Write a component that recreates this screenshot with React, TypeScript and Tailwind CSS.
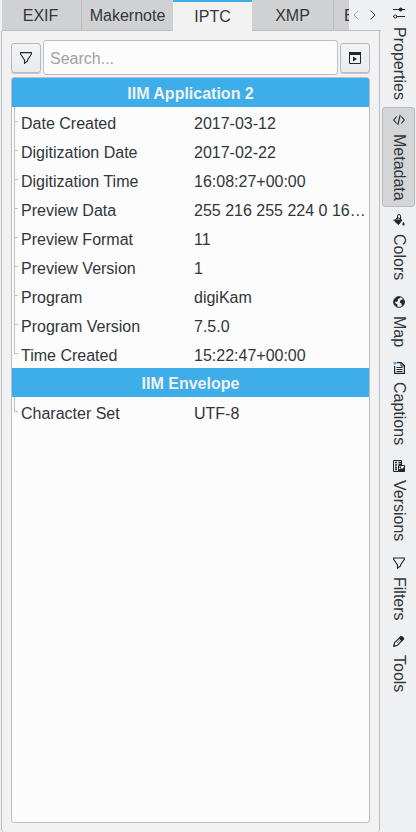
import type { ReactNode } from "react";

const INK = "#232629";

function FunnelIcon() {
  return (
    <svg width="12" height="12" viewBox="0 0 12 12" fill="none" stroke={INK} strokeWidth="1.1">
      <path d="M0.6 0.6H11.4V2.2L7.5 8V9L4.5 11.4V8L0.6 2.2Z" />
    </svg>
  );
}

function PlayWindowIcon() {
  return (
    <svg width="12" height="12" viewBox="0 0 12 12">
      <path d="M0.5 0.5H11.5V11.5H0.5Z" fill="none" stroke={INK} />
      <path d="M0 0H12V3H0ZM4 4.5L8 7L4 9.5Z" fill={INK} />
    </svg>
  );
}

const icons: Record<string, ReactNode> = {
  properties: (
    <g stroke={INK} fill="none">
      <path d="M0 2.5H12M3.5 9.5H12M0 9.5H1" />
      <circle cx="7.7" cy="2.5" r="1.5" fill={INK} />
      <circle cx="2.3" cy="9.5" r="1.5" />
    </g>
  ),
  metadata: (
    <path d="M3.7 2.5L0.7 6L3.7 9.5M8.3 2.5L11.3 6L8.3 9.5M7.2 1L4.8 11" stroke={INK} fill="none" strokeWidth="1.1" />
  ),
  colors: (
    <g stroke={INK} fill={INK}>
      <path d="M4.5 5V1.8Q4.5 0.6 6 0.6Q7.5 0.6 7.5 1.8V5" fill="none" />
      <path d="M2 6H9L5.5 10.6L2 7.5Z" />
      <path d="M4.5 3.4L8.8 6.2M2.2 6L4.6 3.3" fill="none" />
      <path d="M10.4 7.8Q12.8 11.2 10.4 11.4Q8.4 11.2 10.4 7.8Z" stroke="none" />
      <path d="M0.3 6.2H2" />
    </g>
  ),
  map: (
    <g>
      <circle cx="6" cy="6" r="5.4" fill="none" stroke={INK} />
      <path d="M1 3.5L4 0.9L7.3 1.1L6.5 2.6L4.8 3.1L5 4.8L3.4 6L1.7 5.3L3.1 8L4.6 8.6L4.2 11L1.1 8.5Z" fill={INK} />
      <path d="M7.3 4.5L9.7 3.2L11.5 5.2L11 8.2L9 10.4L8.2 7.3L6.7 6.6Z" fill={INK} />
    </g>
  ),
  captions: (
    <g>
      <path d="M4 0.6H8.2L11.4 3.8V11.4H1.6V4" fill="none" stroke={INK} strokeWidth="1.2" />
      <path d="M8 0.5V4H11.5M3.5 5.5H9.5M3.5 7.5H9.5M3.5 9.5H9.5" fill="none" stroke={INK} />
      <path d="M0 0H4L2 3.4Z" fill="#3daee9" />
    </g>
  ),
  versions: (
    <g>
      <path d="M0.5 0.5H8.5V5M0.5 0.5V11.5H5" fill="none" stroke={INK} />
      <path d="M2 2.5H4M2 5H4M2 7.5H4M2 9.5H4M5.5 2.5H8M5.5 4.5H8" stroke={INK} strokeWidth="1.3" />
      <path d="M5.5 5.5H11.5V11.5H5.5Z" fill="#eff0f1" stroke={INK} />
      <path d="M5.5 11.5V10L8 8L9 9L11.5 6.5V11.5ZM6.5 6.5H8V8H6.5Z" fill={INK} />
    </g>
  ),
  filters: (
    <path d="M0.6 1H11.4V2.4L7.5 8V9L4.5 11.2V8L0.6 2.4Z" fill="none" stroke={INK} strokeWidth="1.1" />
  ),
  tools: (
    <g>
      <path d="M0.8 11.2L1.5 7.8L7.8 1.5L10.5 4.2L4.2 10.5Z" fill="none" stroke={INK} strokeWidth="1.1" />
      <path d="M5.8 3.5L8.7 0.7L11.4 3.3L8.5 6.2ZM0.5 11.5L1 9L3 11Z" fill={INK} />
      <path d="M4 8L6.8 5.2" stroke={INK} strokeWidth="0.6" />
    </g>
  ),
};

const sideTabs = [
  { icon: "properties", label: "Properties", size: "h-[107px]" },
  { icon: "metadata", label: "Metadata", size: "h-[100px]", active: true },
  { icon: "colors", label: "Colors", size: "h-[82px]" },
  { icon: "map", label: "Map", size: "h-[66px]" },
  { icon: "captions", label: "Captions", size: "h-[98px]" },
  { icon: "versions", label: "Versions", size: "h-[97px]" },
  { icon: "filters", label: "Filters", size: "h-[78px]" },
  { icon: "tools", label: "Tools", size: "h-[75px]" },
];

const application = [
  ["Date Created", "2017-03-12"],
  ["Digitization Date", "2017-02-22"],
  ["Digitization Time", "16:08:27+00:00"],
  ["Preview Data", "255 216 255 224 0 16 74 70 73 70"],
  ["Preview Format", "11"],
  ["Preview Version", "1"],
  ["Program", "digiKam"],
  ["Program Version", "7.5.0"],
  ["Time Created", "15:22:47+00:00"],
];

function Group({ title, rows }: { title: string; rows: string[][] }) {
  return (
    <section>
      <h2 className="flex h-[29px] items-center justify-center bg-[#3daee9] pt-[2px] font-bold text-[#eff0f1]">{title}</h2>
      {rows.map(([name, value], i) => (
        <div key={name} className="flex h-[29px]">
          <div className="w-[9px] shrink-0 pl-[2px]">
            <div
              className={
                "w-[4px] border-l border-[#bfc1c2] " +
                (i === rows.length - 1 ? "h-[15px] border-b" : "h-[29px]")
              }
            >
              {i < rows.length - 1 && <div className="h-[15px] border-b border-[#bfc1c2]" />}
            </div>
          </div>
          <div className="w-[173px] shrink-0 pt-[2px]">{name}</div>
          <div className="min-w-0 flex-1 truncate pt-[2px] pr-[3px]">{value}</div>
        </div>
      ))}
    </section>
  );
}

const tab = "flex h-[31px] shrink-0 items-center justify-center border-b border-[#bcbebf] bg-[#cfd1d2] pt-px";
const toolButton =
  "flex h-[30px] w-[30px] shrink-0 items-center justify-center rounded-[3px] border border-[#b5b7b9] bg-linear-to-b from-[#f2f3f4] to-[#eaebec] shadow-[0_1px_0_#c5c7c8]";

export default function App() {
  return (
    <div className="flex h-[832px] w-[416px] overflow-hidden bg-[#eff0f1] font-['Liberation_Sans',Arial,sans-serif] text-[16px] leading-[29px] text-[#31363b]">
      <main className="flex w-[381px] shrink-0 flex-col">
        <nav className="flex h-[31px] pl-[2px]">
          <div className={`${tab} w-[80px] border-r pr-[2px]`}>EXIF</div>
          <div className={`${tab} w-[91px]`}>Makernote</div>
          <div className="flex h-[31px] w-[79px] shrink-0 items-center justify-center border-t-2 border-[#3daee9] bg-[#f2f2f2] pb-px">
            IPTC
          </div>
          <div className={`${tab} w-[82px] border-r`}>XMP</div>
          <div className="flex h-[31px] w-[15px] shrink-0 overflow-hidden border-b border-[#bcbebf] bg-[#cfd1d2] pt-px pl-[10px]">
            Exif
          </div>
          <div className="flex h-[31px] flex-1 items-center gap-[11px] border-b border-[#bcbebf] pl-[4px]">
            <svg width="6" height="10" viewBox="0 0 6 10" fill="none" stroke="#a5a8aa">
              <path d="M5.5 0.5L1 5L5.5 9.5" />
            </svg>
            <svg width="6" height="10" viewBox="0 0 6 10" fill="none" stroke="#31363b">
              <path d="M0.5 0.5L5 5L0.5 9.5" />
            </svg>
          </div>
        </nav>
        <div className="ml-px flex min-h-0 w-[379px] flex-1 flex-col rounded-b-[3px] border-x border-[#bcbebf] bg-[#f2f2f2] px-[9px] pt-[9px] pb-[9px]">
          <div className="flex h-[35px] items-center gap-[2px]">
            <button className={toolButton}><FunnelIcon /></button>
            <div className="flex h-[35px] flex-1 items-center rounded-[3px] border border-[#bcbebf] bg-[#fcfcfc] pt-px pl-[6px] text-[#a0a2a3]">
              Search...
            </div>
            <button className={toolButton}><PlayWindowIcon /></button>
          </div>
          <div className="mt-[2px] flex-1 overflow-hidden rounded-[3px] border border-[#bcbebf] bg-[#fcfcfc]">
            <Group title="IIM Application 2" rows={application} />
            <Group title="IIM Envelope" rows={[["Character Set", "UTF-8"]]} />
          </div>
        </div>
      </main>
      <aside className="flex flex-1 flex-col pl-px">
        {sideTabs.map((item) => (
          <div
            key={item.label}
            className={
              "flex w-[33px] shrink-0 flex-col items-center gap-[8px] rounded-[3px] border pt-[6px] " +
              item.size +
              (item.active ? " border-[#b9bbbd] bg-[#d3d5d6]" : " border-transparent")
            }
          >
            <svg width="12" height="12" viewBox="0 0 12 12" className="shrink-0">{icons[item.icon]}</svg>
            <span className="leading-[20px] whitespace-nowrap [writing-mode:vertical-rl]">{item.label}</span>
          </div>
        ))}
      </aside>
    </div>
  );
}
